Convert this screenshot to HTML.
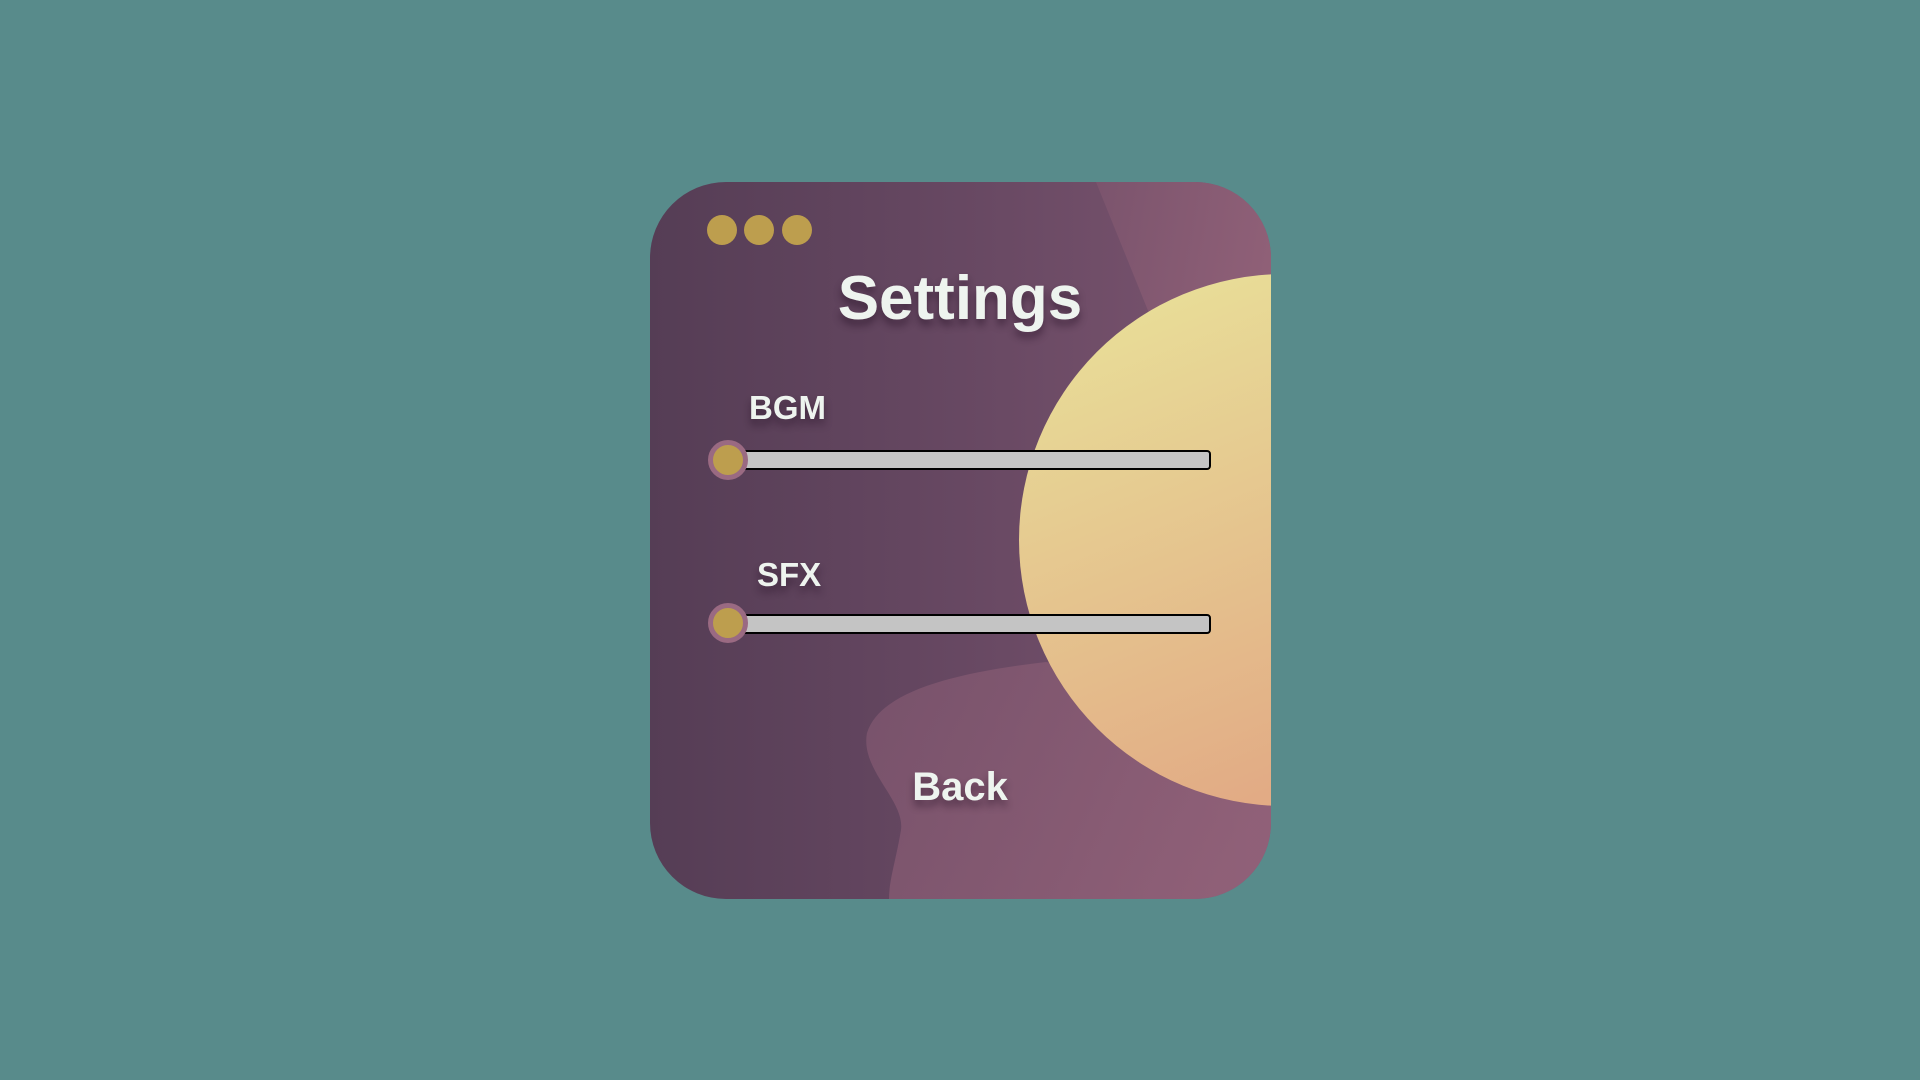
<!DOCTYPE html>
<html><head><meta charset="utf-8"><style>
html,body{margin:0;padding:0;width:1920px;height:1080px;background:#588b8b;overflow:hidden;font-family:"Liberation Sans",sans-serif}
.t{position:absolute;color:#eef4ef;font-weight:bold;text-shadow:0 6px 8px rgba(30,10,30,.45);white-space:nowrap}
.track{position:absolute;left:732px;width:475px;height:16px;background:#c4c4c4;border:2px solid #000;border-radius:4px}
.thumb{position:absolute;left:708px;width:30px;height:30px;border-radius:50%;background:#bd9e4e;border:5px solid #9a6a82}
.dot{position:absolute;top:215px;width:30px;height:30px;border-radius:50%;background:#bd9e4e}
</style></head><body>
<svg width="1920" height="1080" style="position:absolute;left:0;top:0">
<defs>
<clipPath id="c"><rect x="650" y="182" width="621" height="717" rx="76" ry="76"/></clipPath>
<linearGradient id="bg" x1="0" y1="0" x2="1" y2="0"><stop offset="0" stop-color="#553d55"/><stop offset="0.5" stop-color="#674862"/><stop offset="1" stop-color="#7c5570"/></linearGradient>
<linearGradient id="sh" x1="0" y1="0" x2="1" y2="0.3"><stop offset="0" stop-color="#7b546d"/><stop offset="1" stop-color="#936279"/></linearGradient>
<linearGradient id="sun" x1="0" y1="0" x2="0.4" y2="1"><stop offset="0" stop-color="#e9e49a"/><stop offset="1" stop-color="#e2ab85"/></linearGradient>
</defs>
<g clip-path="url(#c)">
<rect x="650" y="182" width="621" height="717" fill="url(#bg)"/>
<path d="M1096 182 L1151 318 L1300 520 L1300 182 Z" fill="url(#sh)"/>
<path d="M1046 662 C960 672 880 690 867 733 C860 770 905 800 901 830 C896 860 889 880 889 899 L1300 899 L1300 700 Z" fill="url(#sh)" opacity="0.85"/>
<circle cx="1285" cy="540" r="266" fill="url(#sun)"/>
</g>
</svg>
<div class="dot" style="left:707px"></div>
<div class="dot" style="left:744px"></div>
<div class="dot" style="left:782px"></div>
<div class="t" style="left:0;width:1920px;text-align:center;top:263px;font-size:62px;">Settings</div>
<div class="t" style="left:749px;top:389px;font-size:33px;">BGM</div>
<div class="track" style="top:450px"></div>
<div class="thumb" style="top:440px"></div>
<div class="t" style="left:757px;top:556px;font-size:33px;">SFX</div>
<div class="track" style="top:614px"></div>
<div class="thumb" style="top:603px"></div>
<div class="t" style="left:0;width:1920px;text-align:center;top:765px;font-size:40px;">Back</div>
</body></html>
